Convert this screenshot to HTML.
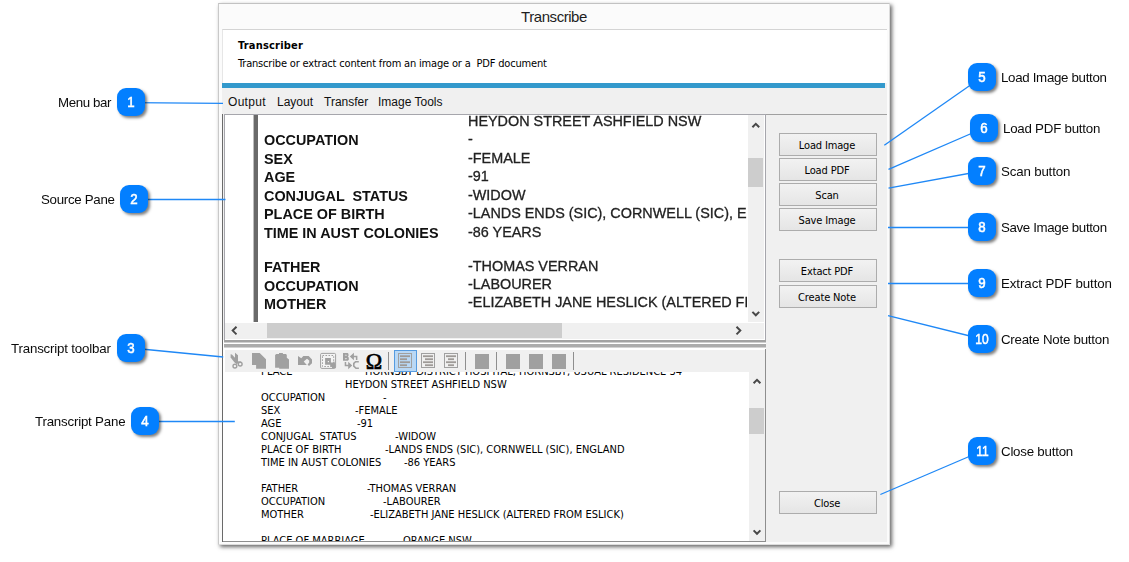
<!DOCTYPE html>
<html lang="en">
<head>
<meta charset="utf-8">
<title>Transcribe</title>
<style>
html,body{margin:0;padding:0;background:#fff;}
body{width:1129px;height:562px;position:relative;overflow:hidden;font-family:"Liberation Sans",sans-serif;color:#000;}
.a{position:absolute;}
.nw{white-space:pre;}
#win{left:218px;top:3px;width:672px;height:542px;box-sizing:border-box;background:#fbfbfb;border:1px solid #c9c9c9;border-top-color:#c2c2c2;border-right-color:#dcdcdc;border-bottom-color:#dcdcdc;box-shadow:2px 2px 4px rgba(0,0,0,.6);}
#title{left:218px;top:8px;width:672px;text-align:center;font-size:15px;letter-spacing:-0.45px;color:#1e1e1e;line-height:18px;}
#client{left:222px;top:29px;width:665px;height:513px;background:#f0f0f0;}
#hdr{left:222px;top:29px;width:665px;height:54px;background:#fff;border-top:1px solid #d4d4d4;border-left:1px solid #e6e6e6;box-sizing:border-box;}
#bluebar{left:222px;top:83px;width:663px;height:5px;background:#3399cc;}
.menu{top:95px;font-size:12px;line-height:14px;color:#111;white-space:pre;}
.thumb{background:#cdcdcd;}
.tah{font-family:"DejaVu Sans","Liberation Sans",sans-serif;font-stretch:condensed;}
.btn{left:779px;width:98px;height:23px;box-sizing:border-box;border:1px solid #acacac;background:linear-gradient(#f2f2f2,#e5e5e5);font-family:"DejaVu Sans","Liberation Sans",sans-serif;font-stretch:condensed;font-size:11px;letter-spacing:-0.15px;line-height:21px;padding:1px 2px 0 0;text-align:center;color:#000;white-space:pre;}
.src{filter:blur(0.3px);font-size:14.4px;line-height:18px;white-space:pre;color:#222;-webkit-text-stroke:0.3px #222;}
.srcb{filter:blur(0.3px);font-size:14.4px;line-height:18px;white-space:pre;font-weight:bold;color:#111;}
.tr{font-family:"DejaVu Sans","Liberation Sans",sans-serif;font-stretch:condensed;font-size:11px;line-height:13px;white-space:pre;color:#000;}
.badge{width:28px;height:28px;border-radius:9px;background:#037fff;color:#fff;font-weight:normal;font-size:14.3px;line-height:29px;text-align:center;box-shadow:2px 2px 3px rgba(0,0,0,.5);}
.badge span{display:inline-block;transform:scaleX(.93);-webkit-text-stroke:0.55px #fff;}
.lbl{will-change:transform;font-size:13.3px;line-height:16px;color:#0c0c0c;white-space:pre;}
</style>
</head>
<body>

<!-- ===== application window ===== -->
<div class="a" id="win"></div>
<div class="a" id="title">Transcribe</div>
<div class="a" id="client"></div>
<div class="a" id="hdr"></div>
<div class="a nw tah" style="left:238px;top:39px;font-size:11px;font-weight:bold;line-height:13px;letter-spacing:0.2px;">Transcriber</div>
<div class="a nw tah" style="left:238px;top:57px;font-size:11px;line-height:13px;letter-spacing:-0.18px;">Transcribe or extract content from an image or a  PDF document</div>
<div class="a" id="bluebar"></div>
<div class="a menu" style="left:228px;letter-spacing:0.3px;">Output</div>
<div class="a menu" style="left:277px;">Layout</div>
<div class="a menu" style="left:324px;">Transfer</div>
<div class="a menu" style="left:378px;">Image Tools</div>

<!-- ===== source pane ===== -->
<div class="a" style="left:222px;top:114px;width:1px;height:428px;background:#6a6a6a;"></div>
<div class="a" id="srcframe" style="left:224px;top:114px;width:542px;height:227px;box-sizing:border-box;background:#fff;border:1px solid #a6a6ac;"></div>
<div class="a" id="srcview" style="left:225px;top:115px;width:522px;height:207px;background:#fff;overflow:hidden;">
  <div class="a" style="left:28px;top:0;width:5px;height:207px;background:#6a6a6a;border-left:1px solid #bdbdbd;box-sizing:border-box;"></div>
  <div class="a srcb" style="left:39px;top:16.2px;">OCCUPATION</div>
  <div class="a srcb" style="left:39px;top:34.7px;">SEX</div>
  <div class="a srcb" style="left:39px;top:53.2px;">AGE</div>
  <div class="a srcb" style="left:39px;top:71.7px;">CONJUGAL  STATUS</div>
  <div class="a srcb" style="left:39px;top:90.2px;">PLACE OF BIRTH</div>
  <div class="a srcb" style="left:39px;top:108.7px;">TIME IN AUST COLONIES</div>
  <div class="a srcb" style="left:39px;top:143.0px;">FATHER</div>
  <div class="a srcb" style="left:39px;top:161.5px;">OCCUPATION</div>
  <div class="a srcb" style="left:39px;top:180.0px;">MOTHER</div>
  <div class="a src" style="left:243px;top:-3.0px;">HEYDON STREET ASHFIELD NSW</div>
  <div class="a src" style="left:243px;top:15.3px;">-</div>
  <div class="a src" style="left:243px;top:33.6px;">-FEMALE</div>
  <div class="a src" style="left:243px;top:52.1px;">-91</div>
  <div class="a src" style="left:243px;top:70.6px;">-WIDOW</div>
  <div class="a src" style="left:243px;top:89.0px;">-LANDS ENDS (SIC), CORNWELL (SIC), ENGLAND</div>
  <div class="a src" style="left:243px;top:107.5px;">-86 YEARS</div>
  <div class="a src" style="left:243px;top:141.5px;">-THOMAS VERRAN</div>
  <div class="a src" style="left:243px;top:159.9px;">-LABOURER</div>
  <div class="a src" style="left:243px;top:177.8px;">-ELIZABETH JANE HESLICK (ALTERED FROM ESLICK)</div>
</div>
<!-- source scrollbars -->
<div class="a" style="left:748px;top:115px;width:16px;height:207px;background:#f0f0f0;"></div>
<div class="a thumb" style="left:748px;top:158px;width:15px;height:29px;"></div>
<div class="a" style="left:225px;top:323px;width:539px;height:16px;background:#f0f0f0;"></div>
<div class="a thumb" style="left:267px;top:323px;width:295px;height:15px;"></div>
<svg class="a" style="left:748px;top:115px;" width="16" height="207" viewBox="0 0 16 207"><path d="M4.4 12.3 L7.8 8.9 L11.2 12.3 M4.4 196.9 L7.8 200.3 L11.2 196.9" fill="none" stroke="#484848" stroke-width="2"/></svg>
<svg class="a" style="left:225px;top:322px;" width="539" height="17" viewBox="0 0 539 17"><path d="M11.5 4.8 L7.7 8.6 L11.5 12.4 M511.5 4.8 L515.3 8.6 L511.5 12.4" fill="none" stroke="#484848" stroke-width="2"/></svg>

<!-- splitter -->
<div class="a" style="left:223px;top:340px;width:543px;height:10px;background:#fff;"></div>
<div class="a" style="left:224px;top:340px;width:542px;height:3px;background:linear-gradient(#a2a2a2 0,#a2a2a2 2px,#cfcfcf 2px,#cfcfcf 3px);"></div>
<div class="a" style="left:224px;top:344px;width:542px;height:4px;background:linear-gradient(#ababab 0,#ababab 3px,#d2d2d2 3px,#d2d2d2 4px);"></div>

<!-- ===== transcript pane ===== -->
<div class="a" id="trframe" style="left:223px;top:349px;width:543px;height:193px;box-sizing:border-box;background:#fff;border-right:1px solid #8e8e8e;border-bottom:1px solid #8e8e8e;"></div>
<div class="a" id="toolbar" style="left:225px;top:350px;width:540px;height:22px;background:#f0f0f0;"></div>
<div class="a" id="trview" style="left:224px;top:372px;width:525px;height:169px;background:#fff;overflow:hidden;">
  <div class="a tr" style="left:37px;top:-7px;">PLACE</div>
  <div class="a tr" style="left:141px;top:-7px;">HORNSBY DISTRICT HOSPITAL, HORNSBY, USUAL RESIDENCE 34</div>
  <div class="a tr" style="left:121px;top:6px;">HEYDON STREET ASHFIELD NSW</div>
  <div class="a tr" style="left:37px;top:19px;">OCCUPATION</div><div class="a tr" style="left:159px;top:19px;">-</div>
  <div class="a tr" style="left:37px;top:32px;">SEX</div><div class="a tr" style="left:131px;top:32px;">-FEMALE</div>
  <div class="a tr" style="left:37px;top:45px;">AGE</div><div class="a tr" style="left:133px;top:45px;">-91</div>
  <div class="a tr" style="left:37px;top:58px;">CONJUGAL  STATUS</div><div class="a tr" style="left:171px;top:58px;">-WIDOW</div>
  <div class="a tr" style="left:37px;top:71px;">PLACE OF BIRTH</div><div class="a tr" style="left:161px;top:71px;">-LANDS ENDS (SIC), CORNWELL (SIC), ENGLAND</div>
  <div class="a tr" style="left:37px;top:84px;">TIME IN AUST COLONIES</div><div class="a tr" style="left:180px;top:84px;">-86 YEARS</div>
  <div class="a tr" style="left:37px;top:110px;">FATHER</div><div class="a tr" style="left:143px;top:110px;">-THOMAS VERRAN</div>
  <div class="a tr" style="left:37px;top:123px;">OCCUPATION</div><div class="a tr" style="left:159px;top:123px;">-LABOURER</div>
  <div class="a tr" style="left:37px;top:136px;">MOTHER</div><div class="a tr" style="left:146px;top:136px;">-ELIZABETH JANE HESLICK (ALTERED FROM ESLICK)</div>
  <div class="a tr" style="left:37px;top:162px;">PLACE OF MARRIAGE</div><div class="a tr" style="left:175px;top:162px;">-ORANGE NSW</div>
</div>
<!-- transcript scrollbar -->
<div class="a" style="left:749px;top:372px;width:16px;height:169px;background:#f0f0f0;"></div>
<div class="a thumb" style="left:749px;top:408px;width:15px;height:26px;"></div>
<svg class="a" style="left:749px;top:372px;" width="16" height="169" viewBox="0 0 16 169"><path d="M4.6 11.3 L8 7.9 L11.4 11.3 M4.6 158.4 L8 161.8 L11.4 158.4" fill="none" stroke="#484848" stroke-width="2"/></svg>

<!-- ===== right button panel ===== -->
<div class="a" style="left:766px;top:114px;width:121px;height:1px;background:#a0a0a0;"></div>
<div class="a btn" style="top:133px;">Load Image</div>
<div class="a btn" style="top:158px;">Load PDF</div>
<div class="a btn" style="top:183px;">Scan</div>
<div class="a btn" style="top:208px;">Save Image</div>
<div class="a btn" style="top:259px;">Extact PDF</div>
<div class="a btn" style="top:285px;">Create Note</div>
<div class="a btn" style="top:491px;">Close</div>

<!-- TOOLBAR-ICONS-START -->
<svg class="a" style="left:225px;top:350px;" width="540" height="22" viewBox="225 350 540 22">
 <g fill="#a0a0a0" stroke="none">
  <!-- cut -->
  <path d="M235 352.8 L238 355.3 L238 362 L236.6 364.2 L235 362.4 Z"/>
  <path d="M230.6 354.3 L231.9 354.5 L237.6 360.6 L236.6 363.4 L234.8 362.8 L230.6 357.4 Z"/>
  <path d="M237 361.2 L241.2 361.4 L241.2 362.6 L237 363.8 Z"/>
  <!-- copy -->
  <path d="M252 353 L259.7 353 L266 359.2 L266 368.8 L256.1 368.8 L256.1 364.9 L252 364.9 Z"/>
  <!-- paste -->
  <path d="M275.1 355.1 L276.3 353.9 L279 353.9 L279 353 L282.9 353 L282.9 353.9 L286 353.9 L286.8 355.1 L286.8 357.8 L289 359.4 L289 368.8 L279.2 368.8 L279.2 367.8 L275.1 367.8 Z"/>
  <!-- undo -->
  <path d="M298 355.9 L301.3 358.3 L303.3 356 L308.7 356 L312 359.4 L312 363.3 L309 366 L307.6 364.4 L309.2 362.6 L309.2 360.4 L307 358.8 L303.7 361.5 L306.8 364.9 L298 364.9 Z"/>
  <!-- find/replace -->
  <path d="M343 353.1 L347.8 353.1 L348.5 354 L348.5 356 L347.8 356.8 L348.8 357.6 L348.8 359.8 L347.8 360.8 L343 360.8 Z"/>
  <path d="M349.8 356.5 L353.9 352.8 L353.9 355.7 L357.4 355.7 L357.4 360 L355.9 360 L355.9 357.3 L353.9 357.3 L353.9 360.2 Z"/>
  <path d="M344.7 362 L346.2 362 L346.2 364.7 L348.2 364.7 L348.2 361.8 L352.2 365.5 L348.2 369.2 L348.2 366.3 L344.7 366.3 Z"/>
  <!-- squares -->
  <rect x="475" y="354" width="14" height="15"/>
  <rect x="506" y="354" width="14" height="15"/>
  <rect x="529" y="354" width="14" height="15"/>
  <rect x="552" y="354" width="14" height="15"/>
 </g>
 <g fill="#f4f4f4" stroke="#a0a0a0" stroke-width="1.4">
  <circle cx="234.9" cy="366.1" r="1.9"/>
  <circle cx="240.2" cy="364.1" r="1.9"/>
 </g>
 <!-- B inner marks -->
 <path d="M344.6 355.6 L345.9 354.4 L347.2 355.6 Z M344.6 358.2 L347.2 358.2 L345.9 359.5 Z" fill="#f0f0f0"/>
 <!-- C -->
 <path d="M358.8 361.7 L355.6 361.7 L353.8 363.4 L353.8 366.2 L356 368.3 L358.9 368.3" fill="none" stroke="#a0a0a0" stroke-width="1.6"/>
 <!-- select-all outlines -->
 <rect x="320.6" y="353.4" width="15" height="15" rx="1.2" fill="#f6f6f6" fill-opacity="0.6" stroke="#a0a0a0" stroke-width="1"/>
 <rect x="322.5" y="355.5" width="11.2" height="11" fill="none" stroke="#a0a0a0" stroke-width="1" stroke-dasharray="1.6 1.4"/>
 <path d="M325.1 358 L330.9 358 L330.9 362.6 L333.4 362.6 L333.4 361.4 L334.4 361.4 L335.4 365 L335.4 368 L332 368 L332 366.4 L330.2 366.4 L330.2 364.7 L325.1 364.7 Z" fill="#a0a0a0"/>
 <rect x="327.8" y="361" width="1.2" height="1.2" fill="#f0f0f0"/>
 <!-- separators -->
 <g stroke="#8e8e8e" stroke-width="1">
  <path d="M388.5 352 V370 M465.5 352 V370 M496.5 352 V370 M573.5 352 V370"/>
 </g>
 <!-- selected button -->
 <rect x="394.5" y="350.5" width="22" height="21" fill="#b9d8f5" stroke="#559be0" stroke-width="1"/>
 <!-- align icons -->
 <g fill="none" stroke="#a0a0a0" stroke-width="1">
  <rect x="398.5" y="353.5" width="13" height="14"/>
  <rect x="421.5" y="353.5" width="13" height="14"/>
  <rect x="444.5" y="353.5" width="13" height="14"/>
 </g>
 <g fill="#9e9a97">
  <rect x="400" y="355.3" width="10" height="1.8"/><rect x="400" y="358.3" width="7" height="1.8"/><rect x="400" y="361.3" width="10" height="1.8"/><rect x="400" y="364.3" width="7" height="1.8"/>
  <rect x="423" y="355.3" width="10" height="1.8"/><rect x="425" y="358.3" width="8" height="1.8"/><rect x="423" y="361.3" width="10" height="1.8"/><rect x="425" y="364.3" width="8" height="1.8"/>
  <rect x="446" y="355.3" width="10" height="1.8"/><rect x="448" y="358.3" width="6" height="1.8"/><rect x="446" y="361.3" width="10" height="1.8"/><rect x="448" y="364.3" width="6" height="1.8"/>
 </g>
 <text transform="translate(374 368.7) scale(0.94 1)" x="0" y="0" text-anchor="middle" font-family="'Liberation Serif',serif" font-size="23.5" fill="#000" stroke="#000" stroke-width="0.75">Ω</text>
</svg>
<!-- TOOLBAR-ICONS-END -->

<!-- CALLOUTS-START -->
<svg class="a" style="left:0;top:0;" width="1129" height="562" viewBox="0 0 1129 562"><g stroke="#1f88f6" stroke-width="1.3" fill="none">
<line x1="131" y1="102.6" x2="223" y2="103.4"/>
<line x1="134" y1="199.5" x2="225.5" y2="199.5"/>
<line x1="131" y1="348" x2="223.2" y2="357"/>
<line x1="145" y1="421.5" x2="234.8" y2="421.5"/>
<line x1="982" y1="77" x2="884.3" y2="145.2"/>
<line x1="984" y1="128" x2="888.5" y2="169.3"/>
<line x1="982" y1="171" x2="888.5" y2="188.2"/>
<line x1="982" y1="227.5" x2="888" y2="227.5"/>
<line x1="982" y1="283.5" x2="888" y2="283.5"/>
<line x1="982" y1="339" x2="888" y2="315.6"/>
<line x1="982" y1="451" x2="880.4" y2="494.5"/>
</g></svg>
<div class="a badge" style="left:117px;top:88px;"><span>1</span></div>
<div class="a lbl" style="right:1018px;top:95px;letter-spacing:-0.4px;">Menu bar</div>
<div class="a badge" style="left:120px;top:185px;"><span>2</span></div>
<div class="a lbl" style="right:1014px;top:192px;letter-spacing:-0.29px;">Source Pane</div>
<div class="a badge" style="left:117px;top:334px;"><span>3</span></div>
<div class="a lbl" style="right:1018px;top:341px;letter-spacing:-0.18px;">Transcript toolbar</div>
<div class="a badge" style="left:131px;top:407px;"><span>4</span></div>
<div class="a lbl" style="right:1004px;top:414px;letter-spacing:-0.2px;">Transcript Pane</div>
<div class="a badge" style="left:968px;top:63px;"><span>5</span></div>
<div class="a lbl" style="left:1001px;top:70px;letter-spacing:-0.31px;">Load Image button</div>
<div class="a badge" style="left:970px;top:114px;"><span>6</span></div>
<div class="a lbl" style="left:1003px;top:121px;letter-spacing:-0.23px;">Load PDF button</div>
<div class="a badge" style="left:968px;top:157px;"><span>7</span></div>
<div class="a lbl" style="left:1001px;top:164px;letter-spacing:-0.17px;">Scan button</div>
<div class="a badge" style="left:968px;top:213px;"><span>8</span></div>
<div class="a lbl" style="left:1001px;top:220px;letter-spacing:-0.35px;">Save Image button</div>
<div class="a badge" style="left:968px;top:269px;"><span>9</span></div>
<div class="a lbl" style="left:1001px;top:276px;letter-spacing:-0.08px;">Extract PDF button</div>
<div class="a badge" style="left:968px;top:325px;"><span style="transform:scaleX(.84)">10</span></div>
<div class="a lbl" style="left:1001px;top:332px;letter-spacing:-0.24px;">Create Note button</div>
<div class="a badge" style="left:968px;top:437px;"><span style="transform:scaleX(.84)">11</span></div>
<div class="a lbl" style="left:1001px;top:444px;letter-spacing:-0.22px;">Close button</div>
<!-- CALLOUTS-END -->

</body>
</html>
